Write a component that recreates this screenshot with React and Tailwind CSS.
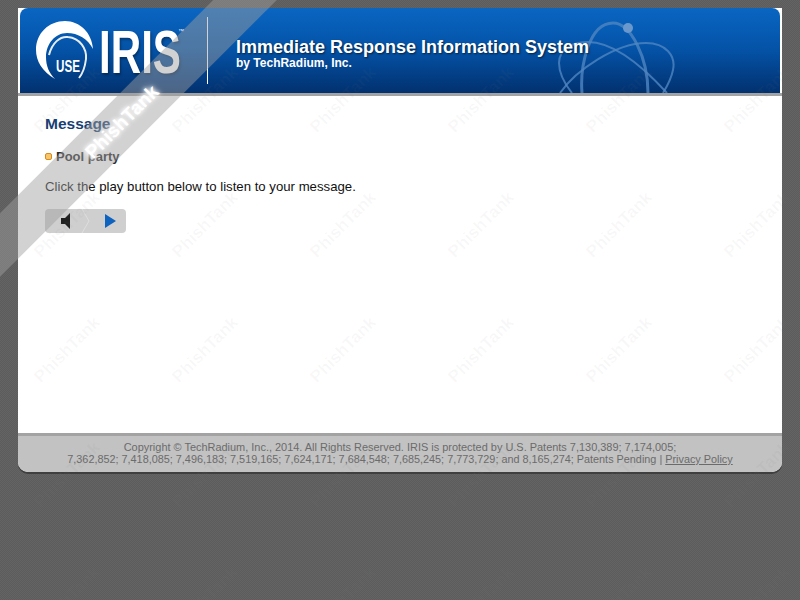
const MARKS = []
for (let row = 0; row < 5; row++) {
  for (let col = 0; col < 6; col++) {
    MARKS.push({ left: col * 138 + 25, top: row * 125 + 87 })
  }
}

function Logo() {
  return (
    <svg width="60" height="60" viewBox="0 0 60 60" className="shrink-0">
      <path d="M19 58C6 50 0 40 0 29 0 12 13 0 29 0c15 0 27 12 28 28C52 18 42 12 31 12 19 12 10 23 10 36c0 9 3 16 9 22Z" fill="#fff" />
      <path d="M13 34C16 22 24 15 32 16c12 1 19 12 18 22-1 8-3 14-7 19" fill="none" stroke="#e6edf5" strokeWidth="2" />
      <text x="20" y="51" fontSize="16" fontWeight="bold" fill="#fff" fontFamily="Liberation Sans, sans-serif" textLength="24" lengthAdjust="spacingAndGlyphs">USE</text>
    </svg>
  )
}

function Atom() {
  return (
    <svg width="125" height="85" viewBox="0 0 125 85" fill="none" stroke="#4f86c2" strokeOpacity="0.8" strokeWidth="2" className="absolute bottom-0 left-[536px]">
      <path d="M26 85C24 60 32 15 57 15c18 0 35 35 35 70" strokeWidth="3" />
      <path d="M4 85C20 62 60 35 90 35c20 0 30 13 27 27-2 10-7 18-10 23" />
      <path d="M16 85C8 75 3 65 3 55 3 40 18 34 32 34c28 0 58 28 79 51" />
      <circle cx="72" cy="20" r="5" fill="#6a98cc" stroke="none" />
    </svg>
  )
}

function Ribbon() {
  return (
    <div className="absolute left-[-100px] top-[100px] flex h-[45px] w-[445px] -rotate-45 items-center justify-center bg-[rgba(160,160,160,0.47)]">
      <span className="text-[19px] font-bold text-white [text-shadow:0_0_4px_#fff,0_0_6px_#fff]">PhishTank</span>
    </div>
  )
}

export default function App() {
  return (
    <div className="relative h-[600px] w-[800px] overflow-hidden bg-[conic-gradient(#5c5c5c_25%,#646464_0_50%,#5c5c5c_0_75%,#646464_0)] bg-[length:2px_2px] pt-2 font-['Liberation_Sans',sans-serif]">
      <div className="mx-[18px] flex h-[464px] flex-col rounded-b-[10px] bg-white shadow-[0_2px_0_#3f3f3f]">
        <header className="relative mx-[2px] flex h-[85px] shrink-0 overflow-hidden rounded-t-[8px] bg-gradient-to-b from-[#0a66c2] via-[#0452a6] to-[#02316f]">
          <Atom />
          <div className="flex w-[187px] shrink-0 items-center pl-[16px]">
            <Logo />
            <span className="relative ml-[3px] mt-[2px] w-[84px] origin-left scale-x-[0.68] text-[62px] font-bold leading-none text-white [text-shadow:2px_2px_3px_rgba(0,0,0,0.35)]">
              IRIS
            </span>
            <span className="mb-[40px] ml-[-5px] text-[6px] leading-none text-white">™</span>
          </div>
          <div className="my-[9px] w-px bg-white" />
          <div className="relative flex min-w-0 flex-1 flex-col whitespace-nowrap pl-[28px] pt-[29px] text-white">
            <h1 className="text-[18px] font-bold leading-[20px] [text-shadow:1px_1px_2px_rgba(0,0,0,0.6)]">Immediate Response Information System</h1>
            <p className="text-[12px] font-bold leading-[13px]">by TechRadium, Inc.</p>
          </div>
        </header>
        <div className="h-[3px] shrink-0 bg-[#a3a3a3]" />
        <main className="flex-1 px-[27px] pt-[19px]">
          <h2 className="text-[15.5px] font-bold leading-[18px] text-[#173f74]">Message</h2>
          <div className="mt-[16px] flex items-center gap-[4px]">
            <span className="size-[7px] rounded-[2px] border border-[#d98a1f] bg-[#f7c66b]" />
            <span className="text-[13px] font-bold leading-[15px] text-[#2a2a2a]">Pool party</span>
          </div>
          <p className="mt-[15px] text-[13.2px] leading-[16px] text-[#111]">Click the play button below to listen to your message.</p>
          <div className="mt-[14px] flex h-[24px] w-[81px] items-center rounded-[4px] bg-[#cfcfcf]">
            <svg width="81" height="24" viewBox="0 0 81 24">
              <path d="M37 0l7 12-7 12" fill="none" stroke="#dedede" strokeWidth="1" />
              <path d="M16 9h4l5-5v16l-5-5h-4Z" fill="#222" />
              <path d="M60 5l11 7-11 7Z" fill="#0d63bd" />
            </svg>
          </div>
        </main>
        <footer className="flex h-[39px] shrink-0 flex-col items-center rounded-b-[10px] border-t-[3px] border-[#a3a3a3] bg-[#c2c2c2] pt-[5px] text-[10.85px] leading-[12px] text-[#6b6b6b]">
          <p className="text-[10.95px]">Copyright © TechRadium, Inc., 2014. All Rights Reserved. IRIS is protected by U.S. Patents 7,130,389; 7,174,005;</p>
          <p>7,362,852; 7,418,085; 7,496,183; 7,519,165; 7,624,171; 7,684,548; 7,685,245; 7,773,729; and 8,165,274; Patents Pending | <a className="underline">Privacy Policy</a></p>
        </footer>
      </div>

      <div className="pointer-events-none absolute inset-0">
        {MARKS.map((m, i) => (
          <span
            key={i}
            className="absolute -rotate-45 text-[17px] font-bold text-[rgba(128,128,128,0.06)]"
            style={{ left: m.left, top: m.top }}
          >
            PhishTank
          </span>
        ))}
        <Ribbon />
      </div>
    </div>
  )
}
